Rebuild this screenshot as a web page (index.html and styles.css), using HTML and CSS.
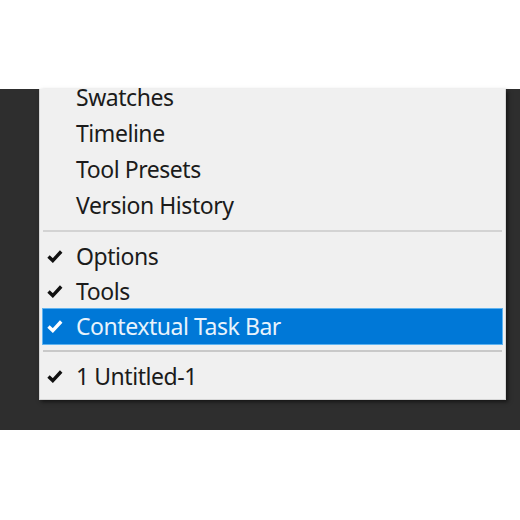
FILE: index.html
```html
<!DOCTYPE html>
<html>
<head>
  <title>Window menu</title>
  <link rel="stylesheet" href="styles.css">
</head>
<body>
  <div class="top-band"></div>
  <div class="workspace">
    <div class="menu">
      <div class="item tall first"><span class="check"></span><span class="label">Swatches</span></div>
      <div class="item tall"><span class="check"></span><span class="label">Timeline</span></div>
      <div class="item tall"><span class="check"></span><span class="label">Tool Presets</span></div>
      <div class="item tall"><span class="check"></span><span class="label">Version History</span></div>
      <div class="separator"></div>
      <div class="item">
        <span class="check"><svg width="16" height="13" viewBox="0 0 16 13"><path d="M1.5 6.5 L5.8 10.6 L14.2 1.5" fill="none" stroke="#111" stroke-width="3.4"/></svg></span>
        <span class="label">Options</span>
      </div>
      <div class="item">
        <span class="check"><svg width="16" height="13" viewBox="0 0 16 13"><path d="M1.5 6.5 L5.8 10.6 L14.2 1.5" fill="none" stroke="#111" stroke-width="3.4"/></svg></span>
        <span class="label">Tools</span>
      </div>
      <div class="item selected">
        <span class="check"><svg width="16" height="13" viewBox="0 0 16 13"><path d="M1.5 6.5 L5.8 10.6 L14.2 1.5" fill="none" stroke="#fff" stroke-width="3.4"/></svg></span>
        <span class="label">Contextual Task Bar</span>
      </div>
      <div class="separator second"></div>
      <div class="item">
        <span class="check"><svg width="16" height="13" viewBox="0 0 16 13"><path d="M1.5 6.5 L5.8 10.6 L14.2 1.5" fill="none" stroke="#111" stroke-width="3.4"/></svg></span>
        <span class="label">1 Untitled-1</span>
      </div>
    </div>
  </div>
</body>
</html>
```

FILE: styles.css
```css
body {
  margin: 0;
  background: #fff;
  font-family: "Noto Sans", "Open Sans", sans-serif;
}

.top-band {
  height: 89px;
}

.workspace {
  display: flow-root;
  height: 341px;
  background: #2e2e2e;
}

.menu {
  display: flow-root;
  width: 465px;
  margin-left: 39px;
  padding-bottom: 5px;
  background: #f0f0f0;
  border: 1px solid #d6d6d6;
  border-top: none;
  box-shadow: 2px 2px 4px rgba(0, 0, 0, 0.55);
}

.item {
  display: flex;
  align-items: center;
  height: 35px;
  margin: 0 3px;
  color: #1b1b1b;
  font-size: 23px;
  letter-spacing: -0.45px;
}

.item.tall {
  height: 36px;
}

.item.first {
  margin-top: -10px;
}

.check {
  width: 29px;
  padding-left: 4px;
  display: flex;
  align-items: center;
}

.label {
  line-height: 35px;
}

.selected {
  background: #0078d7;
  color: #e8f3fc;
  box-shadow: 0 0 0 1px #5fb3f0;
}

.separator {
  height: 2px;
  margin: 7px 3px 7px 3px;
  background: #d3d3d3;
}

.separator.second {
  margin: 6px 3px 7px 3px;
  background: #c9c9c9;
}
```
